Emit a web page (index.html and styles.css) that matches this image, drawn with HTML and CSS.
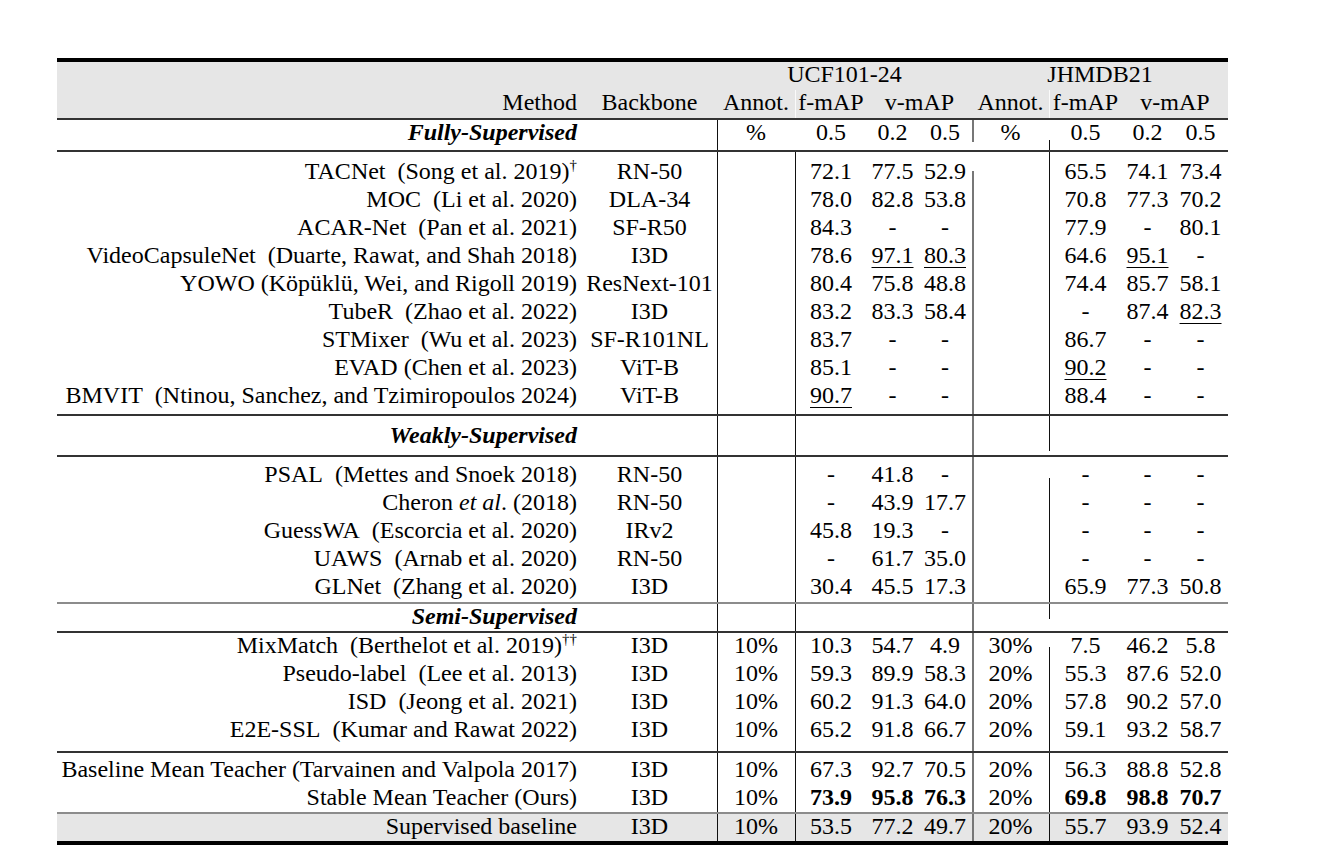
FILE: index.html
```html
<!DOCTYPE html>
<html lang="en">

<head>
	<meta charset="UTF-8">
	<meta name="viewport" content="width=device-width, initial-scale=1.0">
	<title>Action detection results</title>

	<link rel="stylesheet" href="styles.css">
</head>

<body>

	<table class="results">
		<colgroup>
			<col class="c-method">
			<col class="c-backbone">
			<col class="c-annot">
			<col class="c-fmap">
			<col class="c-v2">
			<col class="c-v5">
			<col class="c-annot2">
			<col class="c-fmap2">
			<col class="c-v2b">
			<col class="c-v5b">
		</colgroup>

		<!-- header -->
		<tr class="head head-top">
			<td></td>
			<td></td>
			<td colspan="4">UCF101-24</td>
			<td colspan="4">JHMDB21</td>
		</tr>
		<tr class="head head-sub">
			<td class="method">Method</td>
			<td>Backbone</td>
			<td>Annot.</td>
			<td class="hl">f-mAP</td>
			<td colspan="2">v-mAP</td>
			<td>Annot.</td>
			<td class="hl">f-mAP</td>
			<td colspan="2">v-mAP</td>
		</tr>

		<!-- fully supervised -->
		<tr class="rule section sec-fully">
			<td class="method"><b><i>Fully-Supervised</i></b></td>
			<td></td>
			<td class="vl">%</td>
			<td>0.5</td>
			<td>0.2</td>
			<td>0.5</td>
			<td class="vlg part-head">%</td>
			<td class="vl stub">0.5</td>
			<td>0.2</td>
			<td>0.5</td>
		</tr>
		<tr class="rule first-fully">
			<td class="method">TACNet&nbsp; (Song et al. 2019)<sup>†</sup></td>
			<td>RN-50</td>
			<td class="vl"></td>
			<td class="vl">72.1</td>
			<td>77.5</td>
			<td>52.9</td>
			<td class="vlg part-tail"></td>
			<td class="vl">65.5</td>
			<td>74.1</td>
			<td>73.4</td>
		</tr>
		<tr>
			<td class="method">MOC&nbsp; (Li et al. 2020)</td>
			<td>DLA-34</td>
			<td class="vl"></td>
			<td class="vl">78.0</td>
			<td>82.8</td>
			<td>53.8</td>
			<td class="vlg"></td>
			<td class="vl">70.8</td>
			<td>77.3</td>
			<td>70.2</td>
		</tr>
		<tr>
			<td class="method">ACAR-Net&nbsp; (Pan et al. 2021)</td>
			<td>SF-R50</td>
			<td class="vl"></td>
			<td class="vl">84.3</td>
			<td>-</td>
			<td>-</td>
			<td class="vlg"></td>
			<td class="vl">77.9</td>
			<td>-</td>
			<td>80.1</td>
		</tr>
		<tr>
			<td class="method">VideoCapsuleNet&nbsp; (Duarte, Rawat, and Shah 2018)</td>
			<td>I3D</td>
			<td class="vl"></td>
			<td class="vl">78.6</td>
			<td><u>97.1</u></td>
			<td><u>80.3</u></td>
			<td class="vlg"></td>
			<td class="vl">64.6</td>
			<td><u>95.1</u></td>
			<td>-</td>
		</tr>
		<tr>
			<td class="method">YOWO (Köpüklü, Wei, and Rigoll 2019)</td>
			<td>ResNext-101</td>
			<td class="vl"></td>
			<td class="vl">80.4</td>
			<td>75.8</td>
			<td>48.8</td>
			<td class="vlg"></td>
			<td class="vl">74.4</td>
			<td>85.7</td>
			<td>58.1</td>
		</tr>
		<tr>
			<td class="method">TubeR&nbsp; (Zhao et al. 2022)</td>
			<td>I3D</td>
			<td class="vl"></td>
			<td class="vl">83.2</td>
			<td>83.3</td>
			<td>58.4</td>
			<td class="vlg"></td>
			<td class="vl">-</td>
			<td>87.4</td>
			<td><u>82.3</u></td>
		</tr>
		<tr>
			<td class="method">STMixer&nbsp; (Wu et al. 2023)</td>
			<td>SF-R101NL</td>
			<td class="vl"></td>
			<td class="vl">83.7</td>
			<td>-</td>
			<td>-</td>
			<td class="vlg"></td>
			<td class="vl">86.7</td>
			<td>-</td>
			<td>-</td>
		</tr>
		<tr>
			<td class="method">EVAD (Chen et al. 2023)</td>
			<td>ViT-B</td>
			<td class="vl"></td>
			<td class="vl">85.1</td>
			<td>-</td>
			<td>-</td>
			<td class="vlg"></td>
			<td class="vl"><u>90.2</u></td>
			<td>-</td>
			<td>-</td>
		</tr>
		<tr class="last-fully">
			<td class="method">BMVIT&nbsp; (Ntinou, Sanchez, and Tzimiropoulos 2024)</td>
			<td>ViT-B</td>
			<td class="vl"></td>
			<td class="vl"><u>90.7</u></td>
			<td>-</td>
			<td>-</td>
			<td class="vlg"></td>
			<td class="vl">88.4</td>
			<td>-</td>
			<td>-</td>
		</tr>

		<!-- weakly supervised -->
		<tr class="rule section sec-weak">
			<td class="method"><b><i>Weakly-Supervised</i></b></td>
			<td></td>
			<td class="vl"></td>
			<td class="vl"></td>
			<td></td>
			<td></td>
			<td class="vlg"></td>
			<td class="vl cut"></td>
			<td></td>
			<td></td>
		</tr>
		<tr class="rule first-weak">
			<td class="method">PSAL&nbsp; (Mettes and Snoek 2018)</td>
			<td>RN-50</td>
			<td class="vl"></td>
			<td class="vl">-</td>
			<td>41.8</td>
			<td>-</td>
			<td class="vlg"></td>
			<td class="vl resume">-</td>
			<td>-</td>
			<td>-</td>
		</tr>
		<tr>
			<td class="method">Cheron <i>et al</i>. (2018)</td>
			<td>RN-50</td>
			<td class="vl"></td>
			<td class="vl">-</td>
			<td>43.9</td>
			<td>17.7</td>
			<td class="vlg"></td>
			<td class="vl">-</td>
			<td>-</td>
			<td>-</td>
		</tr>
		<tr>
			<td class="method">GuessWA&nbsp; (Escorcia et al. 2020)</td>
			<td>IRv2</td>
			<td class="vl"></td>
			<td class="vl">45.8</td>
			<td>19.3</td>
			<td>-</td>
			<td class="vlg"></td>
			<td class="vl">-</td>
			<td>-</td>
			<td>-</td>
		</tr>
		<tr>
			<td class="method">UAWS&nbsp; (Arnab et al. 2020)</td>
			<td>RN-50</td>
			<td class="vl"></td>
			<td class="vl">-</td>
			<td>61.7</td>
			<td>35.0</td>
			<td class="vlg"></td>
			<td class="vl">-</td>
			<td>-</td>
			<td>-</td>
		</tr>
		<tr class="last-weak">
			<td class="method">GLNet&nbsp; (Zhang et al. 2020)</td>
			<td>I3D</td>
			<td class="vl"></td>
			<td class="vl">30.4</td>
			<td>45.5</td>
			<td>17.3</td>
			<td class="vlg"></td>
			<td class="vl">65.9</td>
			<td>77.3</td>
			<td>50.8</td>
		</tr>

		<!-- semi supervised -->
		<tr class="rule-soft section sec-semi">
			<td class="method"><b><i>Semi-Supervised</i></b></td>
			<td></td>
			<td class="vl"></td>
			<td class="vl"></td>
			<td></td>
			<td></td>
			<td class="vlg"></td>
			<td class="vl semi-cut"></td>
			<td></td>
			<td></td>
		</tr>
		<tr class="rule first-semi">
			<td class="method">MixMatch&nbsp; (Berthelot et al. 2019)<sup>††</sup></td>
			<td>I3D</td>
			<td class="vl">10%</td>
			<td class="vl">10.3</td>
			<td>54.7</td>
			<td>4.9</td>
			<td class="vlg">30%</td>
			<td class="vl semi-resume">7.5</td>
			<td>46.2</td>
			<td>5.8</td>
		</tr>
		<tr>
			<td class="method">Pseudo-label&nbsp; (Lee et al. 2013)</td>
			<td>I3D</td>
			<td class="vl">10%</td>
			<td class="vl">59.3</td>
			<td>89.9</td>
			<td>58.3</td>
			<td class="vlg">20%</td>
			<td class="vl">55.3</td>
			<td>87.6</td>
			<td>52.0</td>
		</tr>
		<tr>
			<td class="method">ISD&nbsp; (Jeong et al. 2021)</td>
			<td>I3D</td>
			<td class="vl">10%</td>
			<td class="vl">60.2</td>
			<td>91.3</td>
			<td>64.0</td>
			<td class="vlg">20%</td>
			<td class="vl">57.8</td>
			<td>90.2</td>
			<td>57.0</td>
		</tr>
		<tr class="last-semi">
			<td class="method">E2E-SSL&nbsp; (Kumar and Rawat 2022)</td>
			<td>I3D</td>
			<td class="vl">10%</td>
			<td class="vl">65.2</td>
			<td>91.8</td>
			<td>66.7</td>
			<td class="vlg">20%</td>
			<td class="vl">59.1</td>
			<td>93.2</td>
			<td>58.7</td>
		</tr>

		<!-- ours -->
		<tr class="rule first-ours">
			<td class="method">Baseline Mean Teacher (Tarvainen and Valpola 2017)</td>
			<td>I3D</td>
			<td class="vl">10%</td>
			<td class="vl">67.3</td>
			<td>92.7</td>
			<td>70.5</td>
			<td class="vlg">20%</td>
			<td class="vl">56.3</td>
			<td>88.8</td>
			<td>52.8</td>
		</tr>
		<tr class="last-ours">
			<td class="method">Stable Mean Teacher (Ours)</td>
			<td>I3D</td>
			<td class="vl">10%</td>
			<td class="vl"><b>73.9</b></td>
			<td><b>95.8</b></td>
			<td><b>76.3</b></td>
			<td class="vlg">20%</td>
			<td class="vl"><b>69.8</b></td>
			<td><b>98.8</b></td>
			<td><b>70.7</b></td>
		</tr>
		<tr class="rule-soft baseline">
			<td class="method">Supervised baseline</td>
			<td>I3D</td>
			<td class="vl">10%</td>
			<td class="vl">53.5</td>
			<td>77.2</td>
			<td>49.7</td>
			<td class="vlg">20%</td>
			<td class="vl">55.7</td>
			<td>93.9</td>
			<td>52.4</td>
		</tr>
	</table>

</body>

</html>
```

FILE: styles.css
```css
* {
	margin: 0;
	padding: 0;
}

body {
	background: #fff;
	color: #000;
	font-family: "Liberation Serif", "Times New Roman", serif;
	font-size: 24px;
}

/* table frame */

.results {
	width: 1171px;
	margin: 58px 0 0 57px;
	table-layout: fixed;
	border-collapse: collapse;
	border-top: 4px solid #000;
	border-bottom: 4px solid #000;
}

.c-method { width: 525px; }
.c-backbone { width: 135px; }
.c-annot { width: 78px; }
.c-fmap { width: 72px; }
.c-v2 { width: 51px; }
.c-v5 { width: 54px; }
.c-annot2 { width: 77px; }
.c-fmap2 { width: 73px; }
.c-v2b { width: 51px; }
.c-v5b { width: 55px; }

.results td {
	text-align: center;
	line-height: 28px;
	white-space: nowrap;
	vertical-align: top;
}

.results td.method {
	text-align: right;
	padding-right: 5px;
}

sup {
	font-size: 15px;
	line-height: 0;
	vertical-align: 9px;
}

u {
	text-decoration-thickness: 1px;
	text-underline-offset: 4px;
}

/* horizontal rules */

.rule > td {
	border-top: 2px solid #333;
}

.rule-soft > td {
	border-top: 2px solid #8c8c8c;
}

/* gray rows */

.head,
.baseline {
	background: #e6e6e6;
}

.head td {
	line-height: 24px;
	padding-bottom: 4px;
}

/* faint light split in header */
.head .hl {
	background-image: linear-gradient(#fafafa, #fafafa);
	background-repeat: no-repeat;
	background-size: 1px 100%;
}

/* row spacing */

.sec-fully td {
	line-height: 24px;
	padding-bottom: 6px;
}

.sec-weak td {
	line-height: 24px;
	padding: 7px 0 8px;
}

.sec-semi td {
	line-height: 24px;
	padding-bottom: 3px;
}

.first-fully td { padding-top: 5px; }
.last-fully td { padding-bottom: 5px; }

.first-weak td { padding-top: 3px; }
.last-weak td { padding-bottom: 2px; }

.first-semi td {
	line-height: 24px;
	padding-bottom: 2px;
}
.last-semi td { padding-bottom: 8px; }

.first-ours td { padding-top: 2px; }
.last-ours td { padding-bottom: 1px; }

.baseline td {
	line-height: 24px;
	padding-bottom: 3px;
}

/* vertical lines (drawn as a thin background strip on the cell's left edge) */

.vl {
	background-image: linear-gradient(#111, #111);
	background-repeat: no-repeat;
	background-position: left top;
	background-size: 1px 100%;
}

.vlg {
	background-image: linear-gradient(#777, #777);
	background-repeat: no-repeat;
	background-position: left top;
	background-size: 2px 100%;
}

.vlg.part-head { background-size: 2px 22px; }
.vlg.part-tail { background-size: 2px 14px; background-position: left bottom; }

.vl.stub { background-size: 1px 10px; background-position: left bottom; }
.vl.cut { background-size: 1px 35px; }
.vl.resume { background-size: 1px 10px; background-position: left bottom; }
.vl.semi-cut { background-size: 1px 15px; }
.vl.semi-resume { background-size: 1px 12px; background-position: left bottom; }
```
